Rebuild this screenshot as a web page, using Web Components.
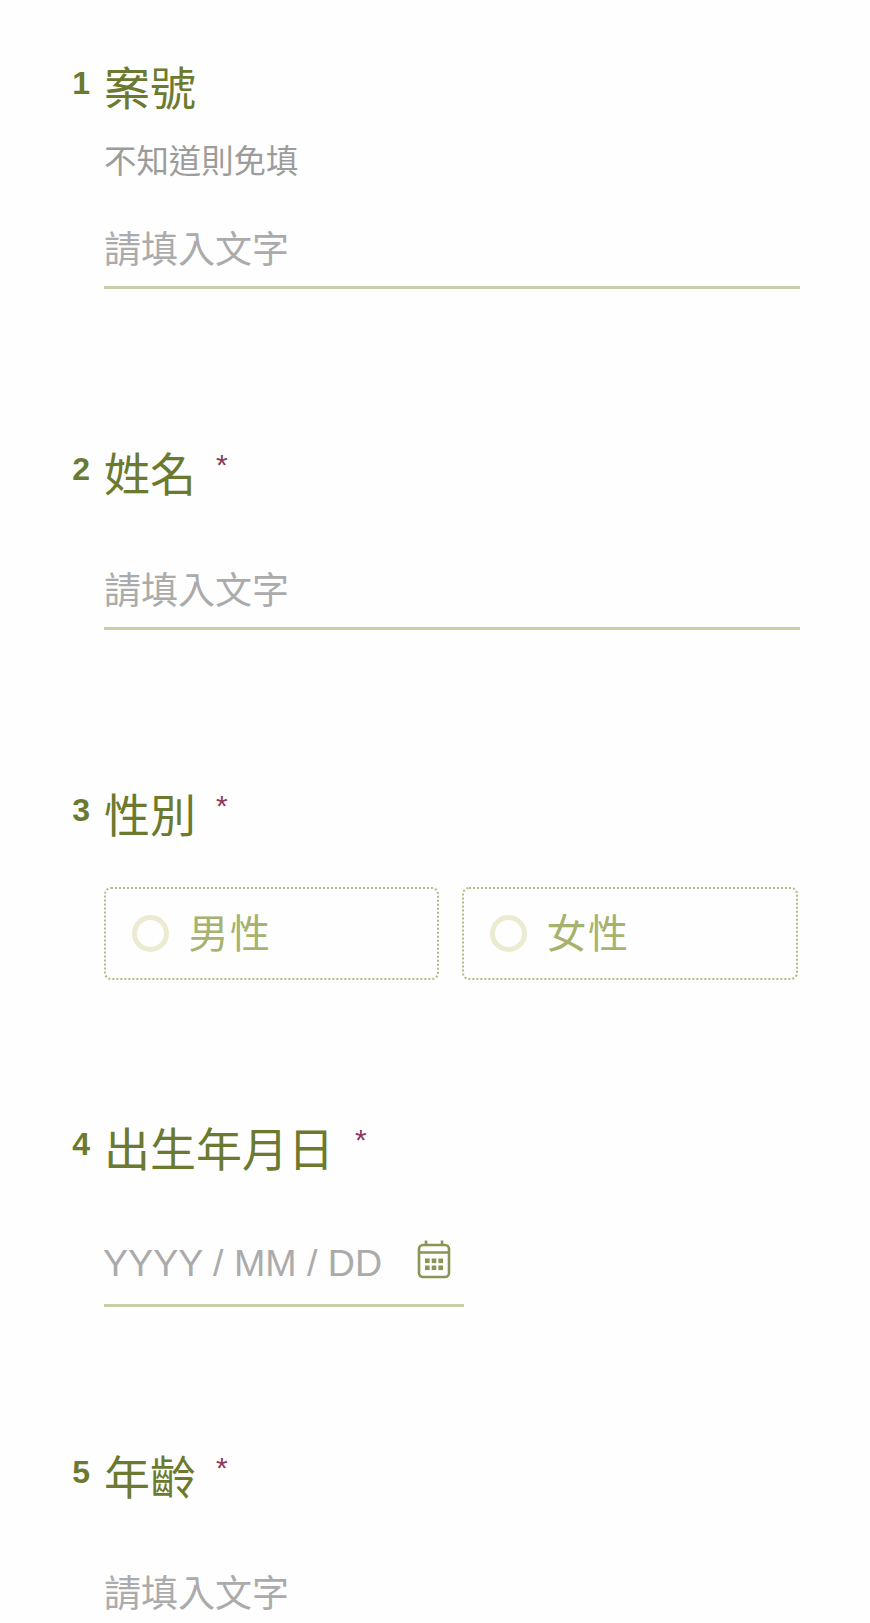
<!DOCTYPE html>
<html lang="zh-Hant"><head><meta charset="utf-8"><title>Form</title>
<style>
html,body{margin:0;padding:0;background:#fefefe;overflow:hidden}
body{height:1623px;font-family:"Liberation Sans","Noto Sans CJK TC",sans-serif;padding-top:59px;box-sizing:border-box}
</style></head><body>
<form-field num="1" label="案號" help="不知道則免填"><text-line></text-line></form-field>
<form-field num="2" label="姓名" required><text-line></text-line></form-field>
<form-field num="3" label="性別" required kind="radio"><radio-group><radio-card>男性</radio-card><radio-card>女性</radio-card></radio-group></form-field>
<form-field num="4" label="出生年月日" required kind="date"><date-line></date-line></form-field>
<form-field num="5" label="年齡" required><text-line></text-line></form-field>
<script>
const FONT='"Liberation Sans","Noto Sans CJK TC",sans-serif';
class FormField extends HTMLElement{
  connectedCallback(){
    if(this.shadowRoot)return;
    const r=this.attachShadow({mode:'open'});
    const req=this.hasAttribute('required');
    const help=this.getAttribute('help');
    const kind=this.getAttribute('kind');
    const top=help?38:kind==='radio'?41:kind==='date'?55:58;
    const bottom=kind==='date'?141:156;
    r.innerHTML=`<style>
:host{display:block;padding:0 70px 0 0;margin-bottom:${bottom}px}
:host(:last-of-type){margin-bottom:0}
.head{display:grid;grid-template-columns:90px 1fr;column-gap:15px;height:60px;align-items:start}
.num{justify-self:end;font:700 32px/48px ${FONT};color:#6b7a2f}
.title{display:flex;align-items:flex-start;margin-left:-1px;font:400 46px/60px ${FONT};color:#6b7a2f}
.star{font:400 30px/40px ${FONT};color:#8a3a5e;margin-left:${kind==='date'?21:20}px}
.help{margin:21px 0 0 104px;font:400 32.4px/44px ${FONT};color:#9c9c9c}
.body{margin:${top}px 0 0 104px}
</style>
<div class="head"><span class="num">${this.getAttribute('num')}</span><span class="title"><span>${this.getAttribute('label')}</span>${req?'<span class="star">*</span>':''}</span></div>
${help?`<div class="help">${help}</div>`:''}
<div class="body"><slot></slot></div>`;
  }
}
class TextLine extends HTMLElement{
  connectedCallback(){
    if(this.shadowRoot)return;
    this.attachShadow({mode:'open'}).innerHTML=`<style>
:host{display:block;border-bottom:3px solid #c9d0a8;height:64px;font:400 37px/57px ${FONT};color:#ababab}
</style>請填入文字`;
  }
}
class DateLine extends HTMLElement{
  connectedCallback(){
    if(this.shadowRoot)return;
    this.attachShadow({mode:'open'}).innerHTML=`<style>
:host{display:flex;justify-content:space-between;width:360px;border-bottom:3px solid #c9d0a8;height:69px;font:400 37.6px/56px ${FONT};color:#ababab}
span{margin-left:-1px}
svg{margin:4px 13px 0 0;display:block}
</style><span>YYYY / MM / DD</span>
<svg width="34" height="40" viewBox="0 0 34 40" fill="none"><rect x="2" y="6" width="30" height="32" rx="4" stroke="#8a9555" stroke-width="2.6"/><path d="M2 13.5H32M9 1.5V6M25 1.5V6" stroke="#8a9555" stroke-width="2.6"/><g fill="#8a9555"><rect x="8" y="19.5" width="4.6" height="4.6"/><rect x="14.7" y="19.5" width="4.6" height="4.6"/><rect x="21.4" y="19.5" width="4.6" height="4.6"/><rect x="8" y="26.5" width="4.6" height="4.6"/><rect x="14.7" y="26.5" width="4.6" height="4.6"/><rect x="21.4" y="26.5" width="4.6" height="4.6"/></g></svg>`;
  }
}
class RadioGroup extends HTMLElement{
  connectedCallback(){
    if(this.shadowRoot)return;
    this.attachShadow({mode:'open'}).innerHTML=`<style>
:host{display:grid;grid-template-columns:335px 336px;column-gap:23px;margin-bottom:-16px}
</style><slot></slot>`;
  }
}
class RadioCard extends HTMLElement{
  connectedCallback(){
    if(this.shadowRoot)return;
    this.attachShadow({mode:'open'}).innerHTML=`<style>
:host{display:flex;align-items:center;box-sizing:border-box;height:93px;border:2px dotted #b3bb84;border-radius:7px;padding-left:25.5px;font:400 40px/1 ${FONT};color:#a8b26f}
i{display:block;box-sizing:border-box;width:37px;height:37px;border:5px solid #ecebd1;border-radius:50%;margin-right:20px}
span{letter-spacing:1.4px}
</style><i></i><span><slot></slot></span>`;
  }
}
customElements.define('form-field',FormField);
customElements.define('text-line',TextLine);
customElements.define('date-line',DateLine);
customElements.define('radio-group',RadioGroup);
customElements.define('radio-card',RadioCard);
</script>
</body></html>
